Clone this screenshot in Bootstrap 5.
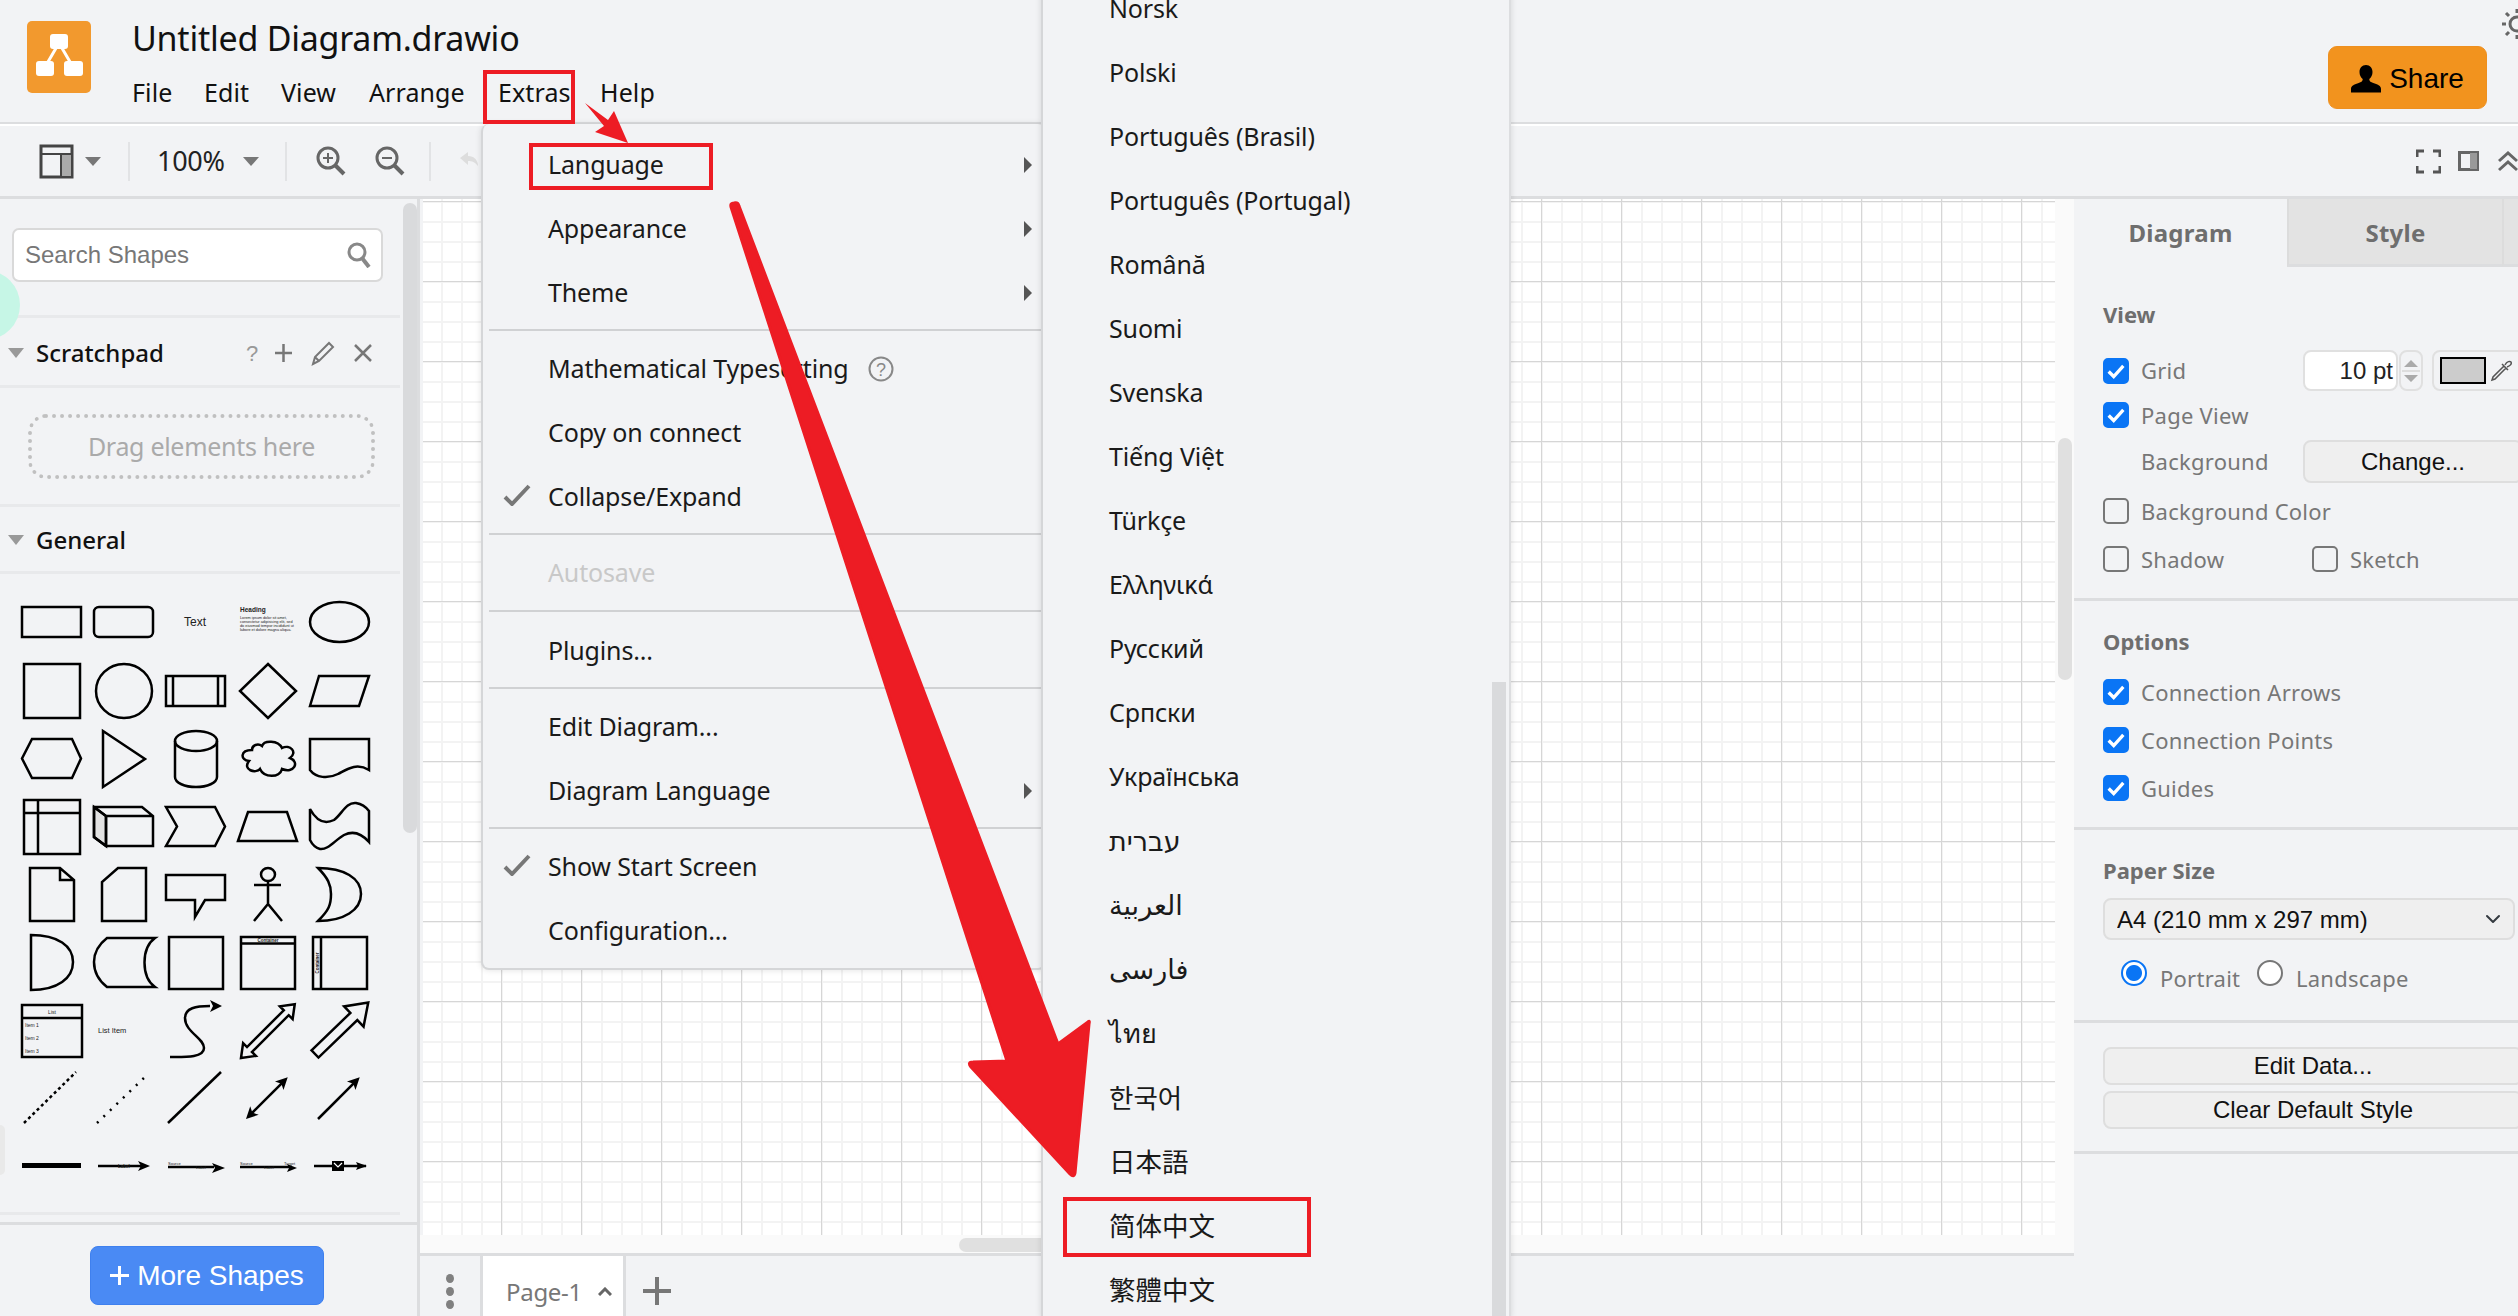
<!DOCTYPE html>
<html lang="en">
<head>
<meta charset="utf-8">
<title>Untitled Diagram.drawio</title>
<link href="https://cdn.jsdelivr.net/npm/bootstrap@5.3.0/dist/css/bootstrap.min.css" rel="stylesheet">
<style>
:root{--ui:"Noto Sans","Noto Sans CJK SC","DejaVu Sans",sans-serif;--ar:"Liberation Sans",Arial,sans-serif;--bg:#f2f3f5;--ln:#dcdddf;}
html,body{height:100%;}
body{font-family:var(--ui);background:var(--bg);color:#1a1a1a;overflow:hidden;width:2518px;height:1316px;position:relative;}
.hdr{height:124px;border-bottom:2px solid var(--ln);flex:none;}
.logo-svg{margin:21px 0 0 27px;flex:none;}
.ttl-col{margin-left:41px;}
.doc-title{font-size:34px;line-height:44px;margin-top:16px;letter-spacing:-.25px;color:#111;}
.mbar{margin-top:15px;}
.mbar span{font-size:25px;line-height:34px;letter-spacing:.1px;color:#111;}
.share-btn{margin-top:46px;width:159px;height:63px;background:#f2931e;border:1px solid #ee9020;border-radius:9px;color:#000;font:28px var(--ar);padding:2px 0 0;}
.share-btn:hover{background:#f2931e;color:#000;}
.sun{margin:8px 0 0 14px;flex:none;}
.tbar{height:75px;border-top:2px solid #fff;border-bottom:3px solid var(--ln);flex:none;padding-left:39px;}
.tsep{width:2px;height:39px;background:#e2e3e5;}
.pct{font-size:27px;letter-spacing:-.3px;color:#222;}
.tcaret{width:0;height:0;border-left:8px solid transparent;border-right:8px solid transparent;border-top:9px solid #777;}
.main{min-height:0;flex:1 1 auto;}
.side{width:420px;flex:none;border-right:3px solid var(--ln);}
.side-up{min-height:0;flex:1 1 auto;}
.side-col{width:400px;flex:none;}
.side-track{width:14px;margin-left:3px;padding-top:4px;}
.side-thumb{height:630px;background:#d9dadc;border-radius:7px;}
.srch-wrap{padding:29px 17px 33px 12px;border-bottom:3px solid #e8e9eb;}
.srch{height:54px;background:#fff;border:2px solid #d9d9d9;border-radius:7px;padding:0 10px 0 11px;font:24px var(--ar);color:#777;}
.sect-head{height:67px;padding:2px 28px 0 8px;border-bottom:3px solid #e8e9eb;font-size:24px;font-weight:500;color:#111;letter-spacing:0;}
.sect-scratch{height:70px;}
.tri{width:0;height:0;border-left:8px solid transparent;border-right:8px solid transparent;border-top:10px solid #999;margin-right:12px;}
.drop-wrap{padding:26px 25px 26px 28px;border-bottom:3px solid #e8e9eb;height:119px;}
.drop-box{height:65px;border:4px dotted #c0c0c0;border-radius:18px;font-size:25px;color:#aaa;letter-spacing:-.3px;}
.shp-grid{display:grid;grid-template-columns:repeat(5,72px);grid-auto-rows:68px;padding:14px 0 12px 16px;border-bottom:3px solid #e8e9eb;}
.shp-grid svg{fill:none;stroke:#000;stroke-width:2.5;display:block;}
.shp-grid text{stroke:none;fill:#222;font-family:var(--ar);}
.shp-grid .sol{fill:#000;stroke:none;}
.more-wrap{height:94px;border-top:3px solid var(--ln);flex:none;padding-top:21px;}
.more-btn{width:234px;height:59px;background:#4a8af4;border:1px solid #3f80ee;border-radius:8px;color:#fff;font:28px var(--ar);padding:0;margin-left:90px;}
.more-btn:hover{background:#4a8af4;color:#fff;}
.center{min-width:0;flex:1 1 auto;}
.cv-row{min-height:0;flex:1 1 auto;}
.cv{flex:1 1 auto;background-color:#fff;background-image:linear-gradient(90deg,#d6d6d6 1px,transparent 1px),linear-gradient(#d6d6d6 1px,transparent 1px),linear-gradient(90deg,#f3f3f3 2px,transparent 2px),linear-gradient(#f3f3f3 2px,transparent 2px);background-size:80px 80px,80px 80px,20px 20px,20px 20px;background-position:78px 82px,78px 82px,-2px 2px,-2px 2px;margin-left:3px;}
.v-track{width:19px;background:#fafafa;padding-left:3px;padding-top:239px;flex:none;}
.v-thumb{width:14px;height:242px;background:#e0e0e0;border-radius:7px;}
.h-track{height:18px;background:#fafafa;flex:none;padding:3px 0 1px 539px;}
.h-thumb{height:14px;width:90px;background:#e0e0e0;border-radius:7px;}
.page-bar{height:63px;border-top:3px solid var(--ln);flex:none;}
.dots{width:63px;border-right:3px solid var(--ln);height:100%;gap:4px;padding-top:10px;}
.dots i{display:block;width:8px;height:9px;border-radius:50%;background:#808080;}
.page-tab{width:143px;background:#fff;border-right:3px solid var(--ln);font-size:24px;color:#777;padding:11px 0 0 23px;letter-spacing:-.3px;}
.plus-ico{margin-left:17px;padding-top:10px;}
.rpanel{width:444px;flex:none;overflow:hidden;color:#777;font-size:22px;letter-spacing:.25px;}
.rtabs{height:68px;border:0;flex:none;flex-wrap:nowrap;}
.rtabs .nav-link{border:0;border-radius:0;color:#6e6e6e;font-weight:700;font-size:24px;padding:0;height:68px;display:flex;align-items:center;justify-content:center;}
.rtabs .nav-link.active{width:213px;background:var(--bg);color:#6e6e6e;}
.tab-off{width:215px;background:#e3e3e3;border-bottom:3px solid var(--ln);border-left:2px solid #dcdcdc;}
.tab-rest{flex:1 1 auto;background:#e3e3e3;border-bottom:3px solid var(--ln);border-left:2px solid #dcdcdc;}
.rsec{padding-left:29px;border-bottom:3px solid var(--ln);flex:none;}
.rhead{font-weight:700;font-size:22px;line-height:30px;color:#6e6e6e;letter-spacing:0;}
.rrow{height:26px;line-height:26px;}
.form-check-input.rck{width:26px;height:26px;margin:0 12px 0 0;border:2px solid #777;border-radius:5px;background-color:var(--bg);flex:none;}
.form-check-input.rck:checked{background-color:#0a75f5;border-color:#0a75f5;background-size:100% 100%;background-image:url("data:image/svg+xml,%3Csvg xmlns='http://www.w3.org/2000/svg' viewBox='0 0 24 24'%3E%3Cpath d='M4 12.500L9.500 18L20 6.500' fill='none' stroke='%23fff' stroke-width='3.600'/%3E%3C/svg%3E");}
.form-check-input.rrd{width:26px;height:26px;margin:-5px 13px 0 0;border:2px solid #777;flex:none;background-color:#fff;align-self:flex-start;}
.form-check-input.rrd:checked{background-color:#fff;border-color:#0a75f5;background-image:radial-gradient(circle,#0a75f5 0,#0a75f5 7.500px,#fff 8.500px);}
.pt-box{width:95px;height:41px;background:#fff;border:2px solid #e0e0e0;border-radius:8px;text-align:right;padding-right:3px;color:#222;font:24px/37px var(--ar);letter-spacing:0;flex:none;}
.spin{width:24px;height:41px;border:2px solid #e0e0e0;border-radius:8px;margin-left:1px;flex:none;}
.clr-box{width:100px;height:41px;border:2px solid #e0e0e0;border-radius:8px;margin-left:9px;padding-left:6px;flex:none;}
.swatch{width:46px;height:27px;background:#ccc;border:2px solid #000;flex:none;}
.wide-btn{width:420px;background:#efefef;border:2px solid #dedede;border-radius:8px;color:#111;font:24px var(--ar);letter-spacing:0;padding:0;flex:none;}
.wide-btn:hover{background:#efefef;color:#111;}
.lbl-fix{flex:none;}
.form-select.pap{width:412px;height:42px;background-color:#efefef;border:2px solid #dedede;border-radius:8px;font:24px var(--ar);color:#111;padding:0 40px 0 12px;background-position:right 10px center;background-size:20px 16px;letter-spacing:0;}
.xmenu{position:absolute;display:block;margin:0;border-radius:8px;background:var(--bg);padding:0;border:2px solid #d5d6d8;box-shadow:0 0 6px rgba(0,0,0,.12);z-index:5;}
.menu-a{left:481px;top:124px;width:565px;height:846px;padding-top:9px;border-top:0;}
.menu-b{left:1041px;top:-25px;width:470px;height:1348px;z-index:6;border-right:2px solid #dcdddf;}
.xmenu .dropdown-item{height:64px;display:flex;align-items:center;padding:0 0 0 65px;font-size:25px;letter-spacing:-.15px;color:#1a1a1a;position:relative;}
.menu-b .dropdown-item{padding-left:66px;letter-spacing:-.15px;}
.menu-b .dropdown-item.big-s{font-size:27px;letter-spacing:0;}
.menu-b .dropdown-item.cjk-s{font-size:26.500px;letter-spacing:0;}
.xmenu .dropdown-item.disabled{color:#c8c8c8;background:none;}
.xmenu .dropdown-divider{margin:4px 0 6px 6px;border-top:2px solid #d0d1d3;opacity:1;}
.xmenu .dropdown-divider.dv-w{margin:5px 0 7px 6px;}
.sub-ar{position:absolute;right:12px;top:24px;width:0;height:0;border-top:8px solid transparent;border-bottom:8px solid transparent;border-left:8px solid #555;}
.ck-ico{position:absolute;left:20px;top:19px;}
.b-thumb{position:absolute;left:449px;top:705px;width:14px;height:640px;background:#d9dadc;}
.ann{position:absolute;left:0;top:0;z-index:8;pointer-events:none;}
.mint{position:absolute;left:-50px;top:270px;width:70px;height:70px;border-radius:50%;background:#c6f6e6;}
.sbar-nub{position:absolute;left:0;top:1125px;width:5px;height:50px;background:#e9e9e9;border-radius:0 5px 5px 0;}
</style>
</head>
<body class="d-flex flex-column">
<header class="hdr d-flex">
  <svg class="logo-svg" width="64" height="72" viewBox="0 0 64 72" aria-hidden="true">
    <rect width="64" height="72" rx="5" fill="#f2992e"/>
    <path d="M32 22 L18 46 M32 22 L46 46" stroke="#fff" stroke-width="3" fill="none"/>
    <rect x="23" y="13" width="18" height="15" rx="3" fill="#fff"/>
    <rect x="9" y="40" width="18" height="15" rx="3" fill="#fff"/>
    <rect x="37" y="40" width="19" height="15" rx="3" fill="#fff"/>
  </svg>
  <div class="ttl-col">
    <div class="doc-title">Untitled Diagram.drawio</div>
    <div class="mbar d-flex">
      <span style="width:72px">File</span><span style="width:77px">Edit</span><span style="width:88px">View</span><span style="width:129px">Arrange</span><span style="width:102px">Extras</span><span>Help</span>
    </div>
  </div>
  <button class="btn share-btn ms-auto d-flex align-items-center justify-content-center gap-2" type="button">
    <svg width="30" height="28" viewBox="0 0 30 28" aria-hidden="true"><path d="M15 0c4 0 6.500 3 6.500 7 0 3-1.300 5.500-3.200 7 0 2 1 3 4.700 4.300 4 1.400 7 2.500 7 5.700v3.500H0V24c0-3.200 3-4.300 7-5.700 3.700-1.300 4.700-2.300 4.700-4.300-1.900-1.500-3.200-4-3.200-7 0-4 2.500-7 6.500-7z" fill="#000"/></svg>
    <span>Share</span>
  </button>
  <svg class="sun" width="17" height="32" viewBox="0 0 17 32" aria-hidden="true"><g stroke="#666" stroke-width="3" fill="none"><circle cx="16" cy="16" r="7"/><path d="M16 1v4M16 27v4M1 16h4M5 5l3 3M5 27l3-3"/></g></svg>
</header>
<div class="tbar d-flex align-items-center">
  <svg width="35" height="35" viewBox="0 0 35 35" aria-hidden="true"><rect x="2" y="2" width="31" height="31" fill="none" stroke="#444" stroke-width="3"/><rect x="22" y="10" width="10" height="22" fill="#aaa"/><path d="M2 10H33M22 10V33" stroke="#444" stroke-width="2" fill="none"/></svg>
  <div class="tcaret" style="margin-left:11px"></div>
  <div class="tsep" style="margin-left:27px"></div>
  <div class="pct" style="margin-left:27px;width:86px">100%</div>
  <div class="tcaret"></div>
  <div class="tsep" style="margin-left:26px"></div>
  <svg style="margin-left:29px" width="30" height="30" viewBox="0 0 30 30" aria-hidden="true"><g fill="none" stroke="#666" stroke-width="3"><circle cx="12" cy="12" r="10"/><path d="M19 19l9 9" stroke-width="4"/><path d="M7 12h10M12 7v10" stroke-width="2"/></g></svg>
  <svg style="margin-left:29px" width="30" height="30" viewBox="0 0 30 30" aria-hidden="true"><g fill="none" stroke="#666" stroke-width="3"><circle cx="12" cy="12" r="10"/><path d="M19 19l9 9" stroke-width="4"/><path d="M7 12h10" stroke-width="2"/></g></svg>
  <div class="tsep" style="margin-left:24px"></div>
  <svg style="margin-left:27px" width="22" height="22" viewBox="0 0 22 22" aria-hidden="true"><path d="M2 8 L10 2 V6 C16 6 20 10 20 16 C17 12 14 11 10 11 V15Z" fill="#ddd"/></svg>
  <svg class="ms-auto" width="25" height="25" viewBox="0 0 25 25" aria-hidden="true"><path d="M1 8V2H8M17 2H24V8M24 17V23H17M8 23H1V17" fill="none" stroke="#555" stroke-width="3"/></svg>
  <svg style="margin-left:17px" width="21" height="20" viewBox="0 0 21 20" aria-hidden="true"><rect x="1.500" y="1.500" width="18" height="17" fill="none" stroke="#666" stroke-width="3"/><rect x="12" y="2" width="7" height="16" fill="#999"/></svg>
  <svg style="margin-left:19px;flex:none" width="20" height="21" viewBox="0 0 20 21" aria-hidden="true"><path d="M1 10L10 2L19 10M1 19L10 11L19 19" fill="none" stroke="#666" stroke-width="3"/></svg>
</div>
<div class="main d-flex">
  <aside class="side d-flex flex-column">
    <div class="side-up d-flex">
      <div class="side-col">
        <div class="srch-wrap"><div class="srch d-flex align-items-center justify-content-between"><span>Search Shapes</span>
          <svg width="24" height="26" viewBox="0 0 24 26" aria-hidden="true"><circle cx="10" cy="10" r="8" fill="none" stroke="#888" stroke-width="3"/><path d="M15 16l7 9" stroke="#888" stroke-width="4"/></svg></div></div>
        <div class="sect-head sect-scratch d-flex align-items-center"><span class="tri"></span><span>Scratchpad</span>
          <svg class="ms-auto" width="126" height="26" viewBox="0 0 126 26" aria-hidden="true"><text x="0" y="21" font-size="22" fill="#999" font-family="Liberation Sans">?</text><path d="M29 13H46M37.500 4V22" stroke="#777" stroke-width="2.500" fill="none"/><path d="M67 24l2-7L83 3l4 4L73 21zM69 17l4 4" stroke="#777" stroke-width="2" fill="none"/><path d="M109 5l16 16M125 5L109 21" stroke="#777" stroke-width="2.500" fill="none"/></svg></div>
        <div class="drop-wrap"><div class="drop-box d-flex align-items-center justify-content-center">Drag elements here</div></div>
        <div class="sect-head d-flex align-items-center"><span class="tri"></span><span>General</span></div>
        <div class="shp-grid">
<svg width="72" height="68"><rect x="6" y="19" width="59" height="30"/></svg>
<svg width="72" height="68"><rect x="6" y="19" width="59" height="30" rx="5"/></svg>
<svg width="72" height="68"><text x="35" y="38" font-size="12" text-anchor="middle">Text</text></svg>
<svg width="72" height="68"><text x="8" y="24" font-size="6.500" font-weight="700">Heading</text><text x="8" y="31" font-size="3.800">Lorem ipsum dolor sit amet,</text><text x="8" y="35" font-size="3.800">consectetur adipisicing elit, sed</text><text x="8" y="39" font-size="3.800">do eiusmod tempor incididunt ut</text><text x="8" y="43" font-size="3.800">labore et dolore magna aliqua.</text></svg>
<svg width="72" height="68"><ellipse cx="35.500" cy="34" rx="29.500" ry="20"/></svg>

<svg width="72" height="68"><rect x="8" y="8" width="56" height="54"/></svg>
<svg width="72" height="68"><ellipse cx="36" cy="35" rx="28" ry="27"/></svg>
<svg width="72" height="68"><rect x="6" y="20" width="59" height="30"/><path d="M13 20V50M58 20V50"/></svg>
<svg width="72" height="68"><path d="M36 8L64 35L36 62L8 35Z"/></svg>
<svg width="72" height="68"><path d="M6 50L15 20H65L55 50Z"/></svg>

<svg width="72" height="68"><path d="M16 15H56L65 34.500L56 54H16L6 34.500Z"/></svg>
<svg width="72" height="68"><path d="M15 7L57 35L15 63Z"/></svg>
<svg width="72" height="68"><path d="M15 17V53C15 59 25 63 36 63C47 63 57 59 57 53V17"/><ellipse cx="36" cy="17" rx="21" ry="10"/></svg>
<svg width="72" height="68"><path d="M20 26C8 26 8 36 17 37C10 46 24 50 28 45C32 54 48 54 50 45C62 50 68 38 58 34C66 28 58 20 50 24C46 16 32 16 30 22C26 19 20 21 20 26Z"/></svg>
<svg width="72" height="68"><path d="M6 15H65V46C52 38 42 46 34 50C24 55 12 54 6 46Z"/></svg>

<svg width="72" height="68"><rect x="8" y="8" width="56" height="54"/><path d="M22 8V62M8 21H64"/></svg>
<svg width="72" height="68"><path d="M6 15L18 24V54L6 45Z" fill="#e2e2e2"/><path d="M6 15H54L65 24V54H18L6 45ZM6 15L18 24H65M18 24V54"/></svg>
<svg width="72" height="68"><path d="M6 15H55L65 34.500L55 54H6L17 34.500Z"/></svg>
<svg width="72" height="68"><path d="M6 49L16 20H55L65 49Z"/></svg>
<svg width="72" height="68"><path d="M6 17C12 28 20 33 30 28C38 22 42 10 52 11C58 12 62 15 65 19V50C58 42 50 38 40 43C30 49 24 58 16 57C12 56 8 52 6 48Z"/></svg>

<svg width="72" height="68"><path d="M14 8H44L58 20V61H14ZM44 8V20H58"/></svg>
<svg width="72" height="68"><path d="M30 8H58V61H14V22Z"/></svg>
<svg width="72" height="68"><path d="M6 15H65V40H45L35 57V40H6Z"/></svg>
<svg width="72" height="68"><ellipse cx="36" cy="14.500" rx="7" ry="6.500"/><path d="M22 25H49M36 21V44M22 61L36 44L50 61"/></svg>
<svg width="72" height="68"><path d="M14 8C40 8 57 18 57 34C57 50 40 61 14 61C25 50 27 45 27 34C27 25 24 18 14 8Z"/></svg>

<svg width="72" height="68"><path d="M15 7C42 7 57 18 57 34C57 50 42 62 15 62Z"/></svg>
<svg width="72" height="68"><path d="M19 10H67C53 20 53 49 67 59H19C10 52 6 44 6 34C6 24 10 17 19 10Z"/></svg>
<svg width="72" height="68"><rect x="9" y="9" width="54" height="52"/></svg>
<svg width="72" height="68"><rect x="9" y="9" width="54" height="52"/><path d="M9 15.500H63"/><text x="36" y="14" font-size="4.500" font-weight="700" text-anchor="middle">Container</text></svg>
<svg width="72" height="68"><rect x="9" y="9" width="54" height="52"/><path d="M17 9V61"/><text transform="translate(15 35) rotate(-90)" font-size="4.500" font-weight="700" text-anchor="middle">Container</text></svg>

<svg width="72" height="68"><rect x="6" y="9" width="60" height="52"/><path d="M6 22H66"/><text x="36" y="18" font-size="5" text-anchor="middle">List</text><text x="9" y="31" font-size="5">Item 1</text><text x="9" y="44" font-size="5">Item 2</text><text x="9" y="57" font-size="5">Item 3</text></svg>
<svg width="72" height="68"><text x="10" y="37" font-size="7.500">List Item</text></svg>
<svg width="72" height="68"><path d="M10 61C24 61 44 62 44 52C44 42 25 36 25 22C25 12 36 10 50 10"/><path class="sol" d="M50 4L62 10L50 16L53 10Z"/></svg>
<svg width="72" height="68"><g transform="translate(9 62) rotate(-45)"><path d="M0 0L12-9V-3.500H64V-9L76 0L64 9V3.500H12V9Z"/></g></svg>
<svg width="72" height="68"><g transform="translate(11 58) rotate(-44)"><path d="M0-5H54V-14L74 0L54 14V5H0Z"/></g></svg>

<svg width="72" height="68"><path d="M8 59L60 8" stroke-dasharray="3 3" stroke-width="2.500"/></svg>
<svg width="72" height="68"><path d="M9 59L58 12" stroke-dasharray="2 7" stroke-width="2.500"/></svg>
<svg width="72" height="68"><path d="M8 59L61 8"/></svg>
<svg width="72" height="68"><g transform="translate(14 55) rotate(-45)"><path d="M6 0H54"/><path class="sol" d="M0 0L12-6L9 0L12 6ZM59 0L47-6L50 0L47 6Z"/></g></svg>
<svg width="72" height="68"><g transform="translate(14 55) rotate(-45)"><path d="M0 0H54"/><path class="sol" d="M59 0L47-6L50 0L47 6Z"/></g></svg>

<svg width="72" height="68"><rect class="sol" x="6" y="31" width="59" height="5"/></svg>
<svg width="72" height="68"><path d="M10 34H54"/><path class="sol" d="M62 34L50 29L53 34L50 39Z"/><text x="36" y="36" font-size="4.500" font-weight="700" text-anchor="middle">Label</text></svg>
<svg width="72" height="68"><path d="M8 35H54"/><path class="sol" d="M65 36L52 31L55 36L52 41Z"/><text x="8" y="33" font-size="4">Source</text><text x="36" y="37" font-size="4">Label</text></svg>
<svg width="72" height="68"><path d="M8 35H60"/><path class="sol" d="M65 36L55 32L57 36L55 40Z"/><text x="8" y="33" font-size="4">Source</text><text x="32" y="37" font-size="4">Label</text><text x="52" y="33" font-size="4">Target</text></svg>
<svg width="72" height="68"><path d="M10 34H62"/><path class="sol" d="M63 34L52 30L54 34L52 38Z"/><rect class="sol" x="28" y="29" width="12" height="10"/><path d="M30 31L34 35L38 31" stroke="#fff" stroke-width="1.200"/></svg>
        </div>
      </div>
      <div class="side-track"><div class="side-thumb"></div></div>
    </div>
    <div class="more-wrap"><button class="btn more-btn d-flex align-items-center justify-content-center gap-2" type="button"><svg width="19" height="19" viewBox="0 0 19 19" aria-hidden="true"><path d="M0 9.500H19M9.500 0V19" stroke="#fff" stroke-width="3"/></svg><span>More Shapes</span></button></div>
  </aside>
  <section class="center d-flex flex-column">
    <div class="cv-row d-flex"><div class="cv"></div><div class="v-track"><div class="v-thumb"></div></div></div>
    <div class="h-track"><div class="h-thumb"></div></div>
    <div class="page-bar d-flex align-items-stretch">
      <div class="dots d-flex flex-column align-items-center justify-content-center"><i></i><i></i><i></i></div>
      <div class="page-tab d-flex align-items-center gap-3"><span>Page-1</span><svg width="14" height="9" viewBox="0 0 14 9" aria-hidden="true"><path d="M1 8L7 2L13 8" fill="none" stroke="#666" stroke-width="3"/></svg></div>
      <div class="plus-ico d-flex align-items-center"><svg width="28" height="28" viewBox="0 0 28 28" aria-hidden="true"><path d="M0 14H28M14 0V28" stroke="#777" stroke-width="4"/></svg></div>
    </div>
  </section>
  <aside class="rpanel d-flex flex-column">
    <ul class="nav rtabs"><li class="nav-item"><a class="nav-link active" href="#">Diagram</a></li><li class="nav-item tab-off"><a class="nav-link" href="#">Style</a></li><li class="nav-item tab-rest"></li></ul>
    <div class="rsec" style="padding-top:32px;padding-bottom:26px">
      <div class="rhead">View</div>
      <div class="d-flex align-items-center" style="height:41px;margin-top:21px">
        <input class="form-check-input rck" type="checkbox" checked aria-label="Grid"><span class="lbl-fix" style="width:162px">Grid</span>
        <div class="pt-box">10 pt</div>
        <div class="spin d-flex align-items-center justify-content-center"><svg width="18" height="30" viewBox="0 0 18 30" aria-hidden="true"><path d="M2 11L9 4L16 11ZM2 19L9 26L16 19Z" fill="#aaa"/><path d="M0 15H18" stroke="#ddd" stroke-width="2"/></svg></div>
        <div class="clr-box d-flex align-items-center gap-1"><div class="swatch"></div><svg width="22" height="22" viewBox="0 0 22 22" aria-hidden="true"><path d="M14 6L3 17L2 20L5 19L16 8M12 4L18 10M15 5C17 1 20 1 21 2C22 4 20 6 17 7" fill="none" stroke="#555" stroke-width="1.500"/></svg></div>
      </div>
      <div class="rrow d-flex align-items-center" style="margin-top:11px"><input class="form-check-input rck" type="checkbox" checked aria-label="Page View"><span>Page View</span></div>
      <div class="d-flex align-items-center" style="height:43px;margin-top:12px"><span class="lbl-fix" style="margin-left:38px;width:162px">Background</span><button class="btn wide-btn" style="height:43px;width:220px" type="button">Change...</button></div>
      <div class="rrow d-flex align-items-center" style="margin-top:15px"><input class="form-check-input rck" type="checkbox" aria-label="Background Color"><span>Background Color</span></div>
      <div class="rrow d-flex align-items-center" style="margin-top:22px"><input class="form-check-input rck" type="checkbox" aria-label="Shadow"><span class="lbl-fix" style="width:171px">Shadow</span><input class="form-check-input rck" type="checkbox" aria-label="Sketch"><span>Sketch</span></div>
    </div>
    <div class="rsec" style="padding-top:25px;padding-bottom:26px">
      <div class="rhead">Options</div>
      <div class="rrow d-flex align-items-center" style="margin-top:23px"><input class="form-check-input rck" type="checkbox" checked aria-label="Connection Arrows"><span>Connection Arrows</span></div>
      <div class="rrow d-flex align-items-center" style="margin-top:22px"><input class="form-check-input rck" type="checkbox" checked aria-label="Connection Points"><span>Connection Points</span></div>
      <div class="rrow d-flex align-items-center" style="margin-top:22px"><input class="form-check-input rck" type="checkbox" checked aria-label="Guides"><span>Guides</span></div>
    </div>
    <div class="rsec" style="padding-top:25px;padding-bottom:29px">
      <div class="rhead">Paper Size</div>
      <select class="form-select pap" style="margin-top:13px" aria-label="Paper Size"><option>A4 (210 mm x 297 mm)</option></select>
      <div class="rrow d-flex align-items-center" style="margin-top:25px;padding-left:18px"><input class="form-check-input rrd" type="radio" name="ori" checked aria-label="Portrait"><span class="lbl-fix" style="width:97px">Portrait</span><input class="form-check-input rrd" type="radio" name="ori" aria-label="Landscape"><span>Landscape</span></div>
    </div>
    <div class="rsec" style="padding-top:24px;padding-bottom:22px">
      <button class="btn wide-btn d-block" style="height:38px" type="button">Edit Data...</button>
      <button class="btn wide-btn d-block" style="height:38px;margin-top:6px" type="button">Clear Default Style</button>
    </div>
  </aside>
</div>

<div class="mint"></div>
<div class="sbar-nub"></div>

<div class="dropdown-menu xmenu menu-a">
  <a class="dropdown-item" href="#">Language<i class="sub-ar"></i></a>
  <a class="dropdown-item" href="#">Appearance<i class="sub-ar"></i></a>
  <a class="dropdown-item" href="#">Theme<i class="sub-ar"></i></a>
  <hr class="dropdown-divider">
  <a class="dropdown-item" href="#">Mathematical Typesetting<svg style="margin-left:19px" width="26" height="26" viewBox="0 0 26 26" aria-hidden="true"><circle cx="13" cy="13" r="11.500" fill="none" stroke="#888" stroke-width="2"/><text x="13" y="20" text-anchor="middle" font-size="18" fill="#888" font-family="Liberation Sans">?</text></svg></a>
  <a class="dropdown-item" href="#">Copy on connect</a>
  <a class="dropdown-item" href="#"><svg class="ck-ico" width="28" height="22" viewBox="0 0 28 22" aria-hidden="true"><path d="M2 13L9 20L26 2" fill="none" stroke="#777" stroke-width="4"/></svg>Collapse/Expand</a>
  <hr class="dropdown-divider">
  <a class="dropdown-item disabled" href="#">Autosave</a>
  <hr class="dropdown-divider dv-w">
  <a class="dropdown-item" href="#">Plugins...</a>
  <hr class="dropdown-divider">
  <a class="dropdown-item" href="#">Edit Diagram...</a>
  <a class="dropdown-item" href="#">Diagram Language<i class="sub-ar"></i></a>
  <hr class="dropdown-divider">
  <a class="dropdown-item" href="#"><svg class="ck-ico" width="28" height="22" viewBox="0 0 28 22" aria-hidden="true"><path d="M2 13L9 20L26 2" fill="none" stroke="#777" stroke-width="4"/></svg>Show Start Screen</a>
  <a class="dropdown-item" href="#">Configuration...</a>
</div>

<div class="dropdown-menu xmenu menu-b">
  <a class="dropdown-item" href="#">Norsk</a>
  <a class="dropdown-item" href="#">Polski</a>
  <a class="dropdown-item" href="#">Português (Brasil)</a>
  <a class="dropdown-item" href="#">Português (Portugal)</a>
  <a class="dropdown-item" href="#">Română</a>
  <a class="dropdown-item" href="#">Suomi</a>
  <a class="dropdown-item" href="#">Svenska</a>
  <a class="dropdown-item" href="#">Tiếng Việt</a>
  <a class="dropdown-item" href="#">Türkçe</a>
  <a class="dropdown-item" href="#">Ελληνικά</a>
  <a class="dropdown-item" href="#">Русский</a>
  <a class="dropdown-item" href="#">Српски</a>
  <a class="dropdown-item" href="#">Українська</a>
  <a class="dropdown-item big-s" href="#">עברית</a>
  <a class="dropdown-item big-s" href="#">العربية</a>
  <a class="dropdown-item big-s" href="#">فارسی</a>
  <a class="dropdown-item big-s" href="#">ไทย</a>
  <a class="dropdown-item cjk-s" href="#" lang="ko" style="font-family:'Noto Sans CJK KR',sans-serif">한국어</a>
  <a class="dropdown-item cjk-s" href="#" lang="ja" style="font-family:'Noto Sans CJK JP',sans-serif">日本語</a>
  <a class="dropdown-item cjk-s" href="#" lang="zh-CN" style="font-family:'Noto Sans CJK SC',sans-serif">简体中文</a>
  <a class="dropdown-item cjk-s" href="#" lang="zh-TW" style="font-family:'Noto Sans CJK TC',sans-serif">繁體中文</a>
  <div class="b-thumb"></div>
</div>

<svg class="ann" width="2518" height="1316" viewBox="0 0 2518 1316" aria-hidden="true">
  <g fill="none" stroke="#ed1c24" stroke-width="4">
    <rect x="485" y="72" width="88" height="50"/>
    <rect x="531" y="145" width="180" height="43"/>
    <rect x="1065" y="1199" width="244" height="56"/>
  </g>
  <path d="M585 103L608 120L614 111L628 143L595 132L604 126Z" fill="#ed1c24"/>
  <path d="M731 207Q730 203 734 203Q738 202 739 206L1058 1044L1088 1022Q1090 1020 1089 1024L1075 1173Q1074 1178 1070 1174L971 1067Q967 1062 973 1062L1007 1061Z" fill="#ed1c24" stroke="#ed1c24" stroke-width="3" stroke-linejoin="round"/>
</svg>
<script src="https://cdn.jsdelivr.net/npm/bootstrap@5.3.0/dist/js/bootstrap.bundle.min.js"></script>
</body>
</html>
